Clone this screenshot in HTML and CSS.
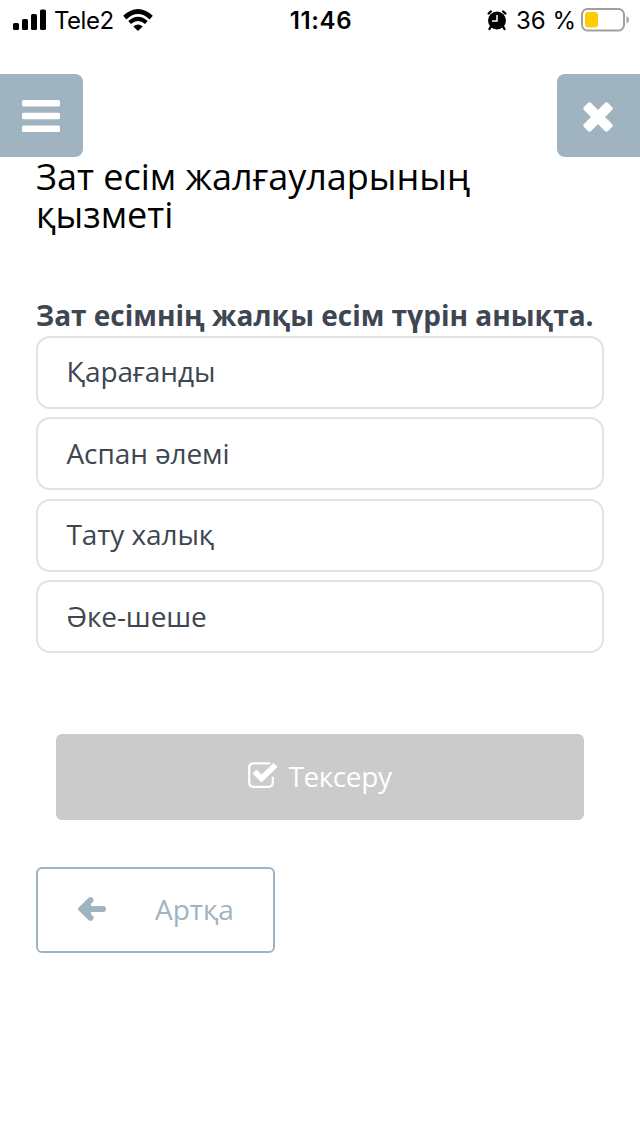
FILE: index.html
```
<!DOCTYPE html>
<html lang="kk">
<head>
    <meta charset="UTF-8">
    <meta name="viewport" content="width=device-width, initial-scale=1.0">
    <title>Зат есім жалғауларының қызметі</title>
    <link rel="stylesheet" href="styles.css">
</head>
<body>
    <div class="status-bar">
        <div class="status-left">
            <svg class="signal" width="34" height="22" viewBox="0 0 34 22">
                <rect x="0" y="14" width="6" height="7" rx="1.5"/>
                <rect x="9" y="10" width="6" height="11" rx="1.5"/>
                <rect x="18" y="5" width="6" height="16" rx="1.5"/>
                <rect x="27" y="0.5" width="6" height="20.5" rx="1.5"/>
            </svg>
            <span class="carrier">Tele2</span>
            <svg class="wifi" width="30" height="22" viewBox="0 0 30 22">
                <path d="M1.800 8.600Q15-3.400 28.200 8.600" fill="none" stroke="#000" stroke-width="4.800"/>
                <path d="M6.600 13.600Q15 6 23.400 13.600" fill="none" stroke="#000" stroke-width="4"/>
                <path d="M10.300 17.500Q15 13.600 19.700 17.500L15 21.900z"/>
            </svg>
        </div>
        <span class="time">11:46</span>
        <div class="status-right">
            <svg class="alarm" width="20" height="21" viewBox="0 0 20 21">
                <circle cx="10" cy="10.500" r="9"/>
                <path d="M1.700 3.500L3.800 1.500M18.300 3.500L16.200 1.500M4 16.500L2.500 19M16 16.500L17.500 19" stroke="#000" stroke-width="2.400" stroke-linecap="round"/>
                <path d="M10 5V11H5" fill="none" stroke="#fff" stroke-width="1.500"/>
            </svg>
            <span class="percent">36 %</span>
            <svg class="battery" width="48" height="24" viewBox="0 0 48 24">
                <rect x="1" y="1" width="42" height="21.500" rx="5.500" fill="#fff" stroke="#a0a0a0" stroke-width="2"/>
                <rect x="4" y="4" width="13" height="15.500" rx="3" fill="#ffcc00"/>
                <path d="M45.500 8q2.500 1.200 2.500 3.800t-2.500 3.800z" fill="#a0a0a0"/>
            </svg>
        </div>
    </div>

    <nav>
        <button class="nav-btn menu-btn" aria-label="Мәзір">
            <svg width="38" height="32" viewBox="0 0 38 32" fill="#fff">
                <rect y="0" width="38" height="6.500" rx="1.500"/>
                <rect y="12.700" width="38" height="6.500" rx="1.500"/>
                <rect y="25.400" width="38" height="6.500" rx="1.500"/>
            </svg>
        </button>
        <button class="nav-btn close-btn" aria-label="Жабу">
            <svg width="30" height="30" viewBox="0 0 30 30" fill="#fff">
                <g transform="rotate(45 15 15)">
                    <rect x="-2" y="10" width="34" height="10" rx="2.200"/>
                    <rect x="10" y="-2" width="10" height="34" rx="2.200"/>
                </g>
            </svg>
        </button>
    </nav>

    <main>
        <h1>Зат есім жалғауларының қызметі</h1>
        <h2>Зат есімнің жалқы есім түрін анықта.</h2>
        <ul class="options">
            <li>Қарағанды</li>
            <li>Аспан әлемі</li>
            <li>Тату халық</li>
            <li>Әке-шеше</li>
        </ul>
        <button class="check-btn">
            <svg width="30" height="27" viewBox="0 0 30 27" fill="none" stroke="#fff">
                <path d="M21.500 1.300H5.500Q1.200 1.300 1.200 5.500V20.500Q1.200 24.800 5.500 24.800H20.500Q24.800 24.800 24.800 20.500V15.500" stroke-width="2.200" stroke-linecap="round"/>
                <path d="M6.500 9.500L13.500 16.500L27.600 3" stroke-width="5.600"/>
            </svg>
            <span>Тексеру</span>
        </button>
        <button class="back-btn">
            <svg width="28" height="24" viewBox="0 0 28 24" fill="none" stroke="#9fb4c0" stroke-linecap="round">
                <path d="M12.500 3.200L3.600 12L12.500 20.800" stroke-width="6"/>
                <path d="M5 12H25" stroke-width="6"/>
                <path d="M13 4L5 12L13 20z" fill="#9fb4c0" stroke="none"/>
            </svg>
            <span>Артқа</span>
        </button>
    </main>
</body>
</html>
```
FILE: styles.css
```
* {
    box-sizing: border-box;
}

body {
    margin: 0;
    min-height: 1136px;
    background: #fff;
    font-family: "Open Sans", "Noto Sans", sans-serif;
    color: #3e4651;
}

svg {
    display: block;
    flex-shrink: 0;
}

/* Status bar */
.status-bar {
    display: grid;
    grid-template-columns: 1fr auto 1fr;
    align-items: center;
    height: 40px;
    padding: 0 11px 0 13px;
    font-family: Inter, sans-serif;
    font-size: 24px;
    color: #000;
}

.status-left,
.status-right {
    display: flex;
    align-items: center;
}

.status-right {
    justify-content: flex-end;
}

.carrier {
    margin: 0 9px 0 7px;
    letter-spacing: -0.5px;
}

.time {
    font-weight: 600;
    letter-spacing: 0.6px;
}

.percent {
    margin: 0 5px 0 9px;
}

/* Menu and close buttons */
nav {
    display: flex;
    justify-content: space-between;
    margin-top: 34px;
}

button {
    display: flex;
    align-items: center;
    padding: 0;
    border: none;
    font-family: inherit;
    font-size: 28px;
    cursor: pointer;
}

.nav-btn {
    justify-content: center;
    width: 83px;
    height: 83px;
    background: #9fb4c0;
}

.menu-btn {
    padding-right: 2px;
    border-radius: 0 8px 8px 0;
}

.close-btn {
    padding: 3px 1px 0 0;
    border-radius: 8px 0 0 8px;
}

main {
    padding: 0 36px;
}

h1 {
    margin: 0;
    padding-top: 1px;
    font-size: 36px;
    font-weight: 400;
    line-height: 38px;
    color: #000;
}

h2 {
    margin: 62px 0 0;
    font-size: 28px;
    line-height: 39.5px;
    white-space: nowrap;
}

.options {
    display: grid;
    gap: 8.6px;
    margin: 0;
    padding: 0;
    list-style: none;
}

.options li {
    display: flex;
    align-items: center;
    height: 73px;
    padding: 0 28.5px 2px;
    border: 2px solid #e2e2e2;
    border-radius: 14px;
    font-size: 28px;
    letter-spacing: -0.1px;
}

.check-btn {
    justify-content: center;
    gap: 10px;
    width: 528px;
    height: 86px;
    margin: 80.7px auto 0;
    padding-bottom: 2px;
    border-radius: 6px;
    background: #cbcbcb;
    color: #fff;
    letter-spacing: -0.4px;
}

.check-btn svg {
    margin-bottom: 1px;
}

.back-btn {
    gap: 49px;
    width: 239px;
    height: 86px;
    margin-top: 47px;
    padding: 0 0 2px 40px;
    border: 2px solid #9fb4c0;
    border-radius: 6px;
    background: #fff;
    color: #9fb4c0;
}
```
